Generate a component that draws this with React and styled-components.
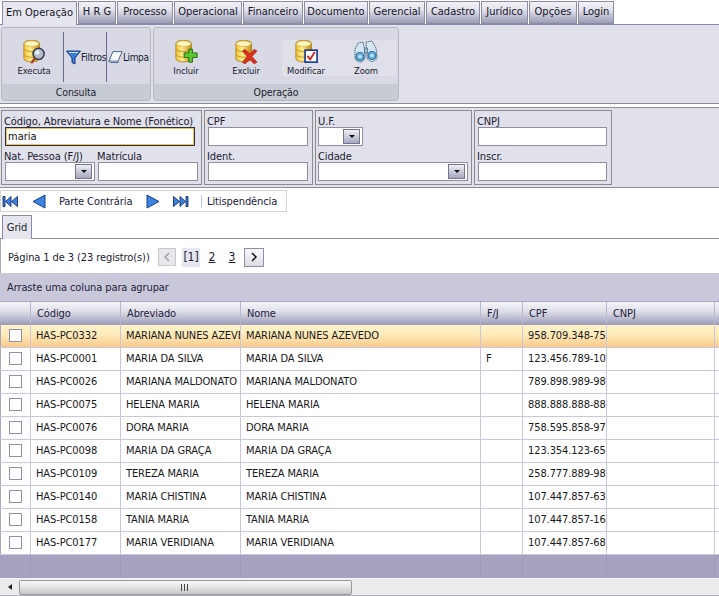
import React from 'react';
import styled, { createGlobalStyle } from 'styled-components';

const Global = createGlobalStyle`
  html, body { margin: 0; padding: 0; background: #fff; }
  body { font-family: "DejaVu Sans Condensed", "DejaVu Sans", Arial, sans-serif; font-stretch: condensed; font-size: 11px; letter-spacing: -0.1px; color: #1c1c24; }
  * { box-sizing: border-box; }
`;

const Page = styled.div`
  width: 719px; height: 596px; overflow: hidden; display: flex; flex-direction: column; background: #fff;
`;
const TabBar = styled.div`
  height: 25px; flex: none; display: flex; padding: 1px 0 0 2px; gap: 1px; border-bottom: 1px solid #8a8aa8; align-items: flex-start;
`;
const Tab = styled.div`
  width: ${p => p.$w}px; height: ${p => (p.$active ? 24 : 23)}px; display: flex; align-items: center; justify-content: center;
  font-size: 11px; letter-spacing: 0; color: #14142a; border: 1px solid #8c8ca8; border-bottom: ${p => (p.$active ? 0 : '1px solid #8c8ca8')};
  background: ${p => (p.$active ? '#e6e6ee' : 'linear-gradient(#f2f2f6 0%, #e4e4ec 35%, #9c9cb8 100%)')};
  position: relative; z-index: 1; padding-bottom: 2px;
`;
const Ribbon = styled.div`
  height: 79px; flex: none; background: #e1e1eb; display: flex; padding: 2px 1px; gap: 2px; border-bottom: 1px solid #8e8e98;
`;
const RibbonGroup = styled.div`
  width: ${p => p.$w}px; height: 74px; border: 1px solid #b8b8c0; border-radius: 3px; background: #d9d9e5;
  display: flex; flex-direction: column; overflow: hidden;
`;
const RibbonBody = styled.div`
  flex: 1; display: flex; align-items: flex-start; padding: 12px 0 0 ${p => p.$pl}px;
`;
const RibbonFoot = styled.div`
  height: 16px; flex: none; background: #c7cbd4; display: flex; align-items: center; justify-content: center; font-size: 10.5px; color: #1e2430; padding-bottom: 1px;
`;
const BigItem = styled.div`
  width: ${p => p.$w || 60}px; height: 36px; flex: none; display: flex; flex-direction: column; align-items: center; justify-content: flex-end;
  font-size: 9.4px; line-height: 11px; letter-spacing: -0.1px; color: #14202e;
  background: ${p => (p.$light ? `linear-gradient(to right, transparent ${p.$inset || 0}px, #e0e0ea ${p.$inset || 0}px)` : 'transparent')};
  svg { flex: none; margin-bottom: 1px; }
`;
const SmallItem = styled.div`
  width: ${p => p.$w}px; flex: none; display: flex; align-items: center; font-size: 10px; letter-spacing: ${p => p.$ls}px; color: #14202e; height: 50px; padding-left: ${p => p.$pl}px; margin-top: -8px;
  svg { flex: none; }
`;
const VSep = styled.div`
  width: 1px; height: 50px; background: #6a6a90; flex: none; margin-top: -8px;
`;
const Spacer = styled.div`
  height: 3px; background: #fff; flex: none;
`;
const FilterArea = styled.div`
  height: 81px; flex: none; background: #e1e1eb; border-top: 1px solid #8e8e98; border-bottom: 1px solid #8e8e98;
  display: flex; gap: 2px; padding: 2px 1px;
`;
const FilterGroup = styled.div`
  width: ${p => p.$w}px; height: 75px; border: 1px solid #8c8c8c; display: grid;
  grid-template-columns: ${p => p.$cols}; column-gap: 3px; padding: 2px ${p => p.$px || 3}px 0; align-content: start;
`;
const Field = styled.div`
  grid-column: ${p => p.$span || 'auto'}; display: flex; flex-direction: column; height: 35px;
`;
const Label = styled.div`
  height: 14px; font-size: 11px; line-height: 17px; color: #1a1a30; margin-left: ${p => p.$ml ?? -1}px; white-space: nowrap; flex: none;
`;
const TextBox = styled.div`
  height: 19px; flex: none; width: 100%; background: #fff; border: 1px solid #8e8e9e;
`;
const FocusBox = styled.div`
  height: 19px; flex: none; width: 190px; background: #fff; border: 1px solid #30303a; box-shadow: inset 0 0 0 1px #f0c060; padding-left: 2px;
  display: flex; align-items: center; font-size: 11px; letter-spacing: 0; color: #101010;
`;
const SelectBox = styled.div`
  height: 19px; flex: none; width: ${p => p.$w}px; background: #fff; border: 1px solid #8e8e9e; display: flex; justify-content: flex-end;
  align-items: center; padding-right: 2px;
`;
const DropBtn = styled.div`
  width: 17px; height: 15px; border: 1px solid #74748e; background: linear-gradient(#f0f0f6, #a6a6c0);
  display: flex; align-items: center; justify-content: center;
  &::after { content: ''; border-left: 3px solid transparent; border-right: 3px solid transparent; border-top: 3px solid #111; }
`;
const NavBar = styled.div`
  margin-top: 2px; width: 287px; height: 22px; flex: none; border: 1px solid #d4d4d4; display: flex; align-items: center;
`;
const NavIcon = styled.div`
  width: ${p => p.$w}px; margin-left: ${p => p.$ml}px; display: flex; align-items: center; height: 16px; flex: none;
`;
const NavText = styled.div`
  width: ${p => p.$w}px; margin-left: ${p => p.$ml}px; font-size: 11px; color: #20203a; white-space: nowrap;
`;
const NavSep = styled.div`
  width: 1px; height: 13px; background: #c0c0c8; margin-left: 12px; flex: none;
`;
const InnerTabs = styled.div`
  margin-top: 3px; height: 24px; flex: none; border-bottom: 1px solid #8a8aa8; padding-left: 2px;
`;
const InnerTab = styled.div`
  width: 30px; height: 24px; background: #e6e6ee; border: 1px solid #8a8aa8; border-bottom: 0; display: flex; align-items: center; justify-content: center; font-size: 11px;
`;
const Pager = styled.div`
  height: 34px; flex: none; display: flex; align-items: center; padding: 2px 0 0 7px; border-left: 1px solid #a8a8c0; font-size: 11px;
`;
const PagerText = styled.div`
  width: 150px; flex: none; white-space: nowrap; color: #1c1c30;
`;
const PageBtn = styled.div`
  width: ${p => (p.$off ? 18 : 20)}px; height: ${p => (p.$off ? 18 : 19)}px; flex: none; border: 1px solid ${p => (p.$off ? '#c8c8ce' : '#8e8ea8')};
  background: ${p => (p.$off ? '#e8e8ec' : 'linear-gradient(#fafafc, #dcdce6)')}; display: flex; align-items: center; justify-content: center;
`;
const PageNum = styled.div`
  width: ${p => p.$w || 20}px; height: 19px; flex: none; display: flex; align-items: center; justify-content: center; color: #1c1c30; font-size: 12px;
  margin: 0 ${p => p.$mr || 0}px 0 ${p => p.$ml || 0}px;
  background: ${p => (p.$cur ? '#e6e6f0' : 'transparent')};
  text-decoration: ${p => (p.$cur ? 'none' : 'underline')};
`;
const GroupBar = styled.div`
  height: 28px; flex: none; background: #c8c8da; display: flex; align-items: center; padding: 0 0 0 7px; font-size: 11px; color: #22223a;
`;
const COLS = '31px 90px 120px 240px 42px 84px 108px 5px';
const GridRow = styled.div`
  display: grid; grid-template-columns: ${COLS}; flex: none;
`;
const HeadRow = styled(GridRow)`
  height: 24px; background: linear-gradient(#f4f4f8 0%, #dfdfe9 40%, #9b9bb9 100%); border-top: 1px solid #a8a8c0;
`;
const HeadCell = styled.div`
  border-right: 1px solid #b8b8d0; display: flex; align-items: center; padding: 0 0 1px 6px; font-size: 11px; color: #20203a; overflow: hidden; white-space: nowrap;
`;
const Row = styled(GridRow)`
  height: 23px; border-bottom: 1px solid #cac6de;
  background: ${p => (p.$sel ? 'linear-gradient(#fff2c8 0%, #ffedbd 40%, #fbc98a 100%)' : '#fff')};
`;
const Cell = styled.div`
  border-right: 1px solid #cac6de; display: flex; align-items: center; padding: 0 0 1px 5px; font-size: 11px; color: #181820; overflow: hidden; white-space: nowrap;
`;
const CheckCell = styled(Cell)`
  padding: 0 0 2px 8px; border-left: 1px solid #a8a8c0;
`;
const Check = styled.div`
  width: 13px; height: 13px; flex: none; border: 1px solid #8e8ea8; background: #fff;
`;
const FootRow = styled(GridRow)`
  height: 23px; background: #a5a3bf;
`;
const FootCell = styled.div`
  border-right: 1px solid #9d9bb8;
`;
const ScrollBar = styled.div`
  height: 18px; flex: none; background: #ececec; border-top: 1px solid #f6f6f6; border-bottom: 1px solid #b0aec8; display: flex; align-items: center;
`;
const ScrollArrow = styled.div`
  width: 19px; flex: none; display: flex; justify-content: center;
  &::after { content: ''; border-top: 3px solid transparent; border-bottom: 3px solid transparent; border-right: 4px solid #222; }
`;
const ScrollThumb = styled.div`
  width: 333px; height: 15px; flex: none; border: 1px solid #9a9a9a; border-radius: 2px; background: linear-gradient(#f6f6f6, #e6e6e6 45%, #c6c6c6);
  display: flex; align-items: center; justify-content: center;
`;
const Grip = styled.div`
  width: 1px; height: 7px; background: #444; margin-right: 2px;
`;

const Db = ({ children }) => (
  <svg width="24" height="24" viewBox="3 0 26 26">
    <defs>
      <linearGradient id="y" x1="0" x2="1" y1="0" y2="0">
        <stop offset="0" stopColor="#f2c030" /><stop offset=".4" stopColor="#ffec90" /><stop offset="1" stopColor="#c88a10" />
      </linearGradient>
    </defs>
    <path d="M5 4c0-5 17-5 17 0v16c0 5-17 5-17 0z" fill="url(#y)" stroke="#a07818" strokeWidth=".8" />
    <ellipse cx="13.5" cy="4" rx="8" ry="3" fill="#fff6c0" stroke="#c8a030" strokeWidth=".6" />
    <path d="M5.5 10c2 3.500 14 3.500 16 0M5.500 16c2 3.500 14 3.500 16 0" fill="none" stroke="#b88a18" strokeWidth=".9" />
    {children}
  </svg>
);
const Lens = () => (
  <Db>
    <path d="M17 20l-4 5" stroke="#b03020" strokeWidth="2.200" />
    <circle cx="21" cy="15" r="6" fill="#b4bccc" stroke="#30384c" strokeWidth="1.600" />
    <circle cx="19.500" cy="13.500" r="2.500" fill="#e8ecf4" />
  </Db>
);
const Plus = () => (
  <Db><path d="M19 10h4v4h5v5h-5v5h-4v-5h-5v-5h5z" fill="#5cc832" stroke="#1c6a10" strokeWidth="1" /></Db>
);
const XMark = () => (
  <Db><path d="M15 10l5 5 5-5 3 2-5.500 6 5.500 6-3 2-5-5-5 5-3-2 5.500-6-5.500-6z" fill="#d8301c" stroke="#9a2010" strokeWidth=".6" /></Db>
);
const Mod = () => (
  <Db>
    <rect x="15" y="11" width="13" height="13" fill="#fff" stroke="#1c3c90" strokeWidth="1.800" />
    <path d="M17.500 17l3 4 5-8" fill="none" stroke="#d82020" strokeWidth="2" />
  </Db>
);
const Binoc = () => (
  <svg width="24" height="24" viewBox="0 0 24 24">
    <g stroke="#2a4a60" strokeWidth=".8" strokeDasharray="1.500 .6" fill="#d4e6f4">
      <path d="M1 9l3-6 5-1 2 9v6a5 5 0 0 1-10 0z" />
      <path d="M12 2l6-1 4 7 1 8a5 5 0 0 1-10 1z" />
    </g>
    <path d="M10.500 8h3v5h-3z" fill="#9cc0da" stroke="#2a4a60" strokeWidth=".6" />
    <circle cx="6" cy="16.500" r="4" fill="#6ab2e2" stroke="#2a6c98" strokeWidth="1.200" />
    <circle cx="18" cy="15.500" r="4" fill="#6ab2e2" stroke="#2a6c98" strokeWidth="1.200" />
    <circle cx="6" cy="16.500" r="1.600" fill="#cfe8f8" />
    <circle cx="18" cy="15.500" r="1.600" fill="#cfe8f8" />
  </svg>
);
const Funnel = () => (
  <svg width="15" height="15" viewBox="0 0 15 15"><path d="M.5 1h14L9 8v6l-3-1.500V8z" fill="#3a80d8" stroke="#143a80" /><path d="M3 2.500h9" stroke="#cfe4ff" /></svg>
);
const Eraser = () => (
  <svg width="15" height="14" viewBox="0 0 18 15"><path d="M6 1h11l-5 11.500H1z" fill="#f4f8fc" stroke="#2a4a80" /><path d="M1 12.500l2.500 1.500H12l.5-1.500" fill="#a8c0dc" stroke="#2a4a80" /></svg>
);
const Tri = ({ dir }) => (
  <svg width="14" height="15" viewBox="0 0 14 15">
    <path d={dir === 'l' ? 'M13 1v13L1 7.500z' : 'M1 1v13l12-6.500z'} fill="#3a84e0" stroke="#1a3c90" />
  </svg>
);
const Ends = ({ dir }) => (
  <svg width="16" height="11" viewBox="0 0 16 11">
    {dir === 'l'
      ? <path d="M1 .5h2v10H1zM9 .5v10L3.500 5.500zM15.500 .5v10L9.500 5.500z" fill="#3a84e0" stroke="#1a2c70" strokeWidth=".9" />
      : <path d="M13 .5h2v10h-2zM7 .5v10l5.500-5zM.5 .5v10l6-5z" fill="#3a84e0" stroke="#1a2c70" strokeWidth=".9" />}
  </svg>
);
const Chev = ({ dir, off }) => (
  <svg width="8" height="10" viewBox="0 0 8 10">
    <path d={dir === 'l' ? 'M6 1L2 5l4 4' : 'M2 1l4 4-4 4'} fill="none" stroke={off ? '#a0a0a8' : '#111'} strokeWidth="1.500" />
  </svg>
);

const tabs = [['Em Operação', 75], ['H R G', 38], ['Processo', 56], ['Operacional', 68], ['Financeiro', 60], ['Documento', 64], ['Gerencial', 56], ['Cadastro', 54], ['Jurídico', 47], ['Opções', 48], ['Login', 36]];
const rows = [
  ['HAS-PC0332', 'MARIANA NUNES AZEVEDO', 'MARIANA NUNES AZEVEDO', '', '958.709.348-75'],
  ['HAS-PC0001', 'MARIA DA SILVA', 'MARIA DA SILVA', 'F', '123.456.789-10'],
  ['HAS-PC0026', 'MARIANA MALDONATO', 'MARIANA MALDONATO', '', '789.898.989-98'],
  ['HAS-PC0075', 'HELENA MARIA', 'HELENA MARIA', '', '888.888.888-88'],
  ['HAS-PC0076', 'DORA MARIA', 'DORA MARIA', '', '758.595.858-97'],
  ['HAS-PC0098', 'MARIA DA GRAÇA', 'MARIA DA GRAÇA', '', '123.354.123-65'],
  ['HAS-PC0109', 'TEREZA MARIA', 'TEREZA MARIA', '', '258.777.889-98'],
  ['HAS-PC0140', 'MARIA CHISTINA', 'MARIA CHISTINA', '', '107.447.857-63'],
  ['HAS-PC0158', 'TANIA MARIA', 'TANIA MARIA', '', '107.447.857-16'],
  ['HAS-PC0177', 'MARIA VERIDIANA', 'MARIA VERIDIANA', '', '107.447.857-68'],
];

export default function App() {
  return (
    <Page>
      <Global />
      <TabBar>
        {tabs.map(([t, w], i) => <Tab key={t} $w={w} $active={i === 0}>{t}</Tab>)}
      </TabBar>
      <Ribbon>
        <RibbonGroup $w={150}>
          <RibbonBody $pl={3}>
            <BigItem $w={58}><Lens />Executa</BigItem>
            <VSep />
            <SmallItem $w={42} $pl={2} $ls={-0.2}><Funnel />Filtros</SmallItem>
            <VSep />
            <SmallItem $w={43} $pl={1} $ls={-0.4}><Eraser />Limpa</SmallItem>
          </RibbonBody>
          <RibbonFoot>Consulta</RibbonFoot>
        </RibbonGroup>
        <RibbonGroup $w={246}>
          <RibbonBody $pl={2}>
            <BigItem><Plus />Incluir</BigItem>
            <BigItem><XMark />Excluir</BigItem>
            <BigItem $light $inset={6}><Mod />Modificar</BigItem>
            <BigItem $light><Binoc />Zoom</BigItem>
          </RibbonBody>
          <RibbonFoot>Operação</RibbonFoot>
        </RibbonGroup>
      </Ribbon>
      <Spacer />
      <FilterArea>
        <FilterGroup $w={201} $cols="90px 100px">
          <Field $span="1 / 3">
            <Label>Código, Abreviatura e Nome (Fonético)</Label>
            <FocusBox>maria</FocusBox>
          </Field>
          <Field><Label>Nat. Pessoa (F/J)</Label><SelectBox $w={90}><DropBtn /></SelectBox></Field>
          <Field><Label>Matrícula</Label><TextBox /></Field>
        </FilterGroup>
        <FilterGroup $w={109} $cols="100px">
          <Field><Label>CPF</Label><TextBox /></Field>
          <Field><Label>Ident.</Label><TextBox /></Field>
        </FilterGroup>
        <FilterGroup $w={157} $cols="150px" $px={2}>
          <Field><Label $ml={0}>U.F.</Label><SelectBox $w={45}><DropBtn /></SelectBox></Field>
          <Field><Label $ml={0}>Cidade</Label><SelectBox $w={150}><DropBtn /></SelectBox></Field>
        </FilterGroup>
        <FilterGroup $w={138} $cols="129px">
          <Field><Label>CNPJ</Label><TextBox /></Field>
          <Field><Label>Inscr.</Label><TextBox /></Field>
        </FilterGroup>
      </FilterArea>
      <NavBar>
        <NavIcon $w={16} $ml={1}><Ends dir="l" /></NavIcon>
        <NavIcon $w={14} $ml={14}><Tri dir="l" /></NavIcon>
        <NavText $w={87} $ml={13}>Parte Contrária</NavText>
        <NavIcon $w={14} $ml={0}><Tri dir="r" /></NavIcon>
        <NavIcon $w={16} $ml={13}><Ends dir="r" /></NavIcon>
        <NavSep />
        <NavText $w={75} $ml={5}>Litispendência</NavText>
      </NavBar>
      <InnerTabs><InnerTab>Grid</InnerTab></InnerTabs>
      <Pager>
        <PagerText>Página 1 de 3 (23 registro(s))</PagerText>
        <PageBtn $off><Chev dir="l" off /></PageBtn>
        <PageNum $w={18} $ml={6} $cur>[1]</PageNum>
        <PageNum $ml={2}>2</PageNum>
        <PageNum $mr={2}>3</PageNum>
        <PageBtn><Chev dir="r" /></PageBtn>
      </Pager>
      <GroupBar>Arraste uma coluna para agrupar</GroupBar>
      <HeadRow>
        {['', 'Código', 'Abreviado', 'Nome', 'F/J', 'CPF', 'CNPJ', ''].map((h, i) => <HeadCell key={i}>{h}</HeadCell>)}
      </HeadRow>
      {rows.map((r, i) => (
        <Row key={r[0]} $sel={i === 0}>
          <CheckCell><Check /></CheckCell>
          {r.map((c, j) => <Cell key={j}>{c}</Cell>)}
          <Cell />
          <Cell />
        </Row>
      ))}
      <FootRow>
        {Array.from({ length: 8 }).map((_, i) => <FootCell key={i} />)}
      </FootRow>
      <ScrollBar>
        <ScrollArrow />
        <ScrollThumb><Grip /><Grip /><Grip /></ScrollThumb>
      </ScrollBar>
    </Page>
  );
}
